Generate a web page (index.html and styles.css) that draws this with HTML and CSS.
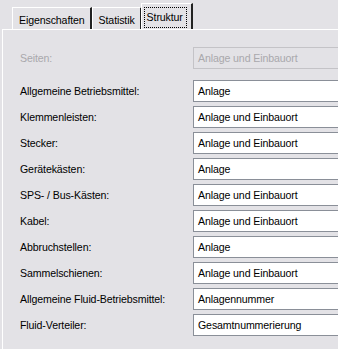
FILE: index.html
```html
<!DOCTYPE html>
<html lang="de">
<head>
  <meta charset="UTF-8" />
  <title>Struktur</title>
  <link rel="stylesheet" href="styles.css">
</head>
<body>
  <div class="tabs">
    <div class="tab">Eigenschaften</div>
    <div class="tab">Statistik</div>
    <div class="tab active"><span class="focus">Struktur</span></div>
  </div>
  <div class="panel">
    <div class="row disabled">
      <span class="label">Seiten:</span>
      <div class="field">Anlage und Einbauort</div>
    </div>
    <div class="rows">
      <div class="row"><span class="label">Allgemeine Betriebsmittel:</span><div class="field">Anlage</div></div>
      <div class="row"><span class="label">Klemmenleisten:</span><div class="field">Anlage und Einbauort</div></div>
      <div class="row"><span class="label">Stecker:</span><div class="field">Anlage und Einbauort</div></div>
      <div class="row"><span class="label">Gerätekästen:</span><div class="field">Anlage</div></div>
      <div class="row"><span class="label">SPS- / Bus-Kästen:</span><div class="field">Anlage und Einbauort</div></div>
      <div class="row"><span class="label">Kabel:</span><div class="field">Anlage und Einbauort</div></div>
      <div class="row"><span class="label">Abbruchstellen:</span><div class="field">Anlage</div></div>
      <div class="row"><span class="label">Sammelschienen:</span><div class="field">Anlage und Einbauort</div></div>
      <div class="row"><span class="label">Allgemeine Fluid-Betriebsmittel:</span><div class="field">Anlagennummer</div></div>
      <div class="row"><span class="label">Fluid-Verteiler:</span><div class="field">Gesamtnummerierung</div></div>
    </div>
  </div>
</body>
</html>
```

FILE: styles.css
```css
:root {
  --bg: #e3e2e6;
  --text: #000;
  --muted: #a9a8ac;
  --field-border: #8a8f98;
}
* { box-sizing: border-box; margin: 0; padding: 0; }
body {
  width: 338px;
  height: 349px;
  overflow: hidden;
  background: var(--bg);
  font-family: 'Liberation Sans', Arial, sans-serif;
  font-size: 10.6px;
  letter-spacing: -0.12px;
  color: var(--text);
}

/* Reiter */
.tabs {
  display: flex;
  align-items: flex-end;
  height: 29px;
  padding-left: 12px;
}
.tab {
  height: 22px;
  padding: 5px 5px 0 6px;
  border-top: 1px solid #fff;
  border-left: 1px solid #fff;
  border-right: 2px solid #222;
  line-height: 14px;
}
.tab.active {
  height: 26px;
  padding: 3px 4px 0 2px;
  margin-left: -1px;
  background: var(--bg);
}
.focus {
  display: block;
  padding: 2px 3px 3px 2px;
  border: 1px dotted #000;
}

/* Inhalt */
.panel {
  height: 320px;
  margin-left: 2px;
  border-top: 1px solid #fff;
  border-left: 1px solid #fff;
  padding: 17px 0 0 17px;
}
.row {
  display: flex;
  align-items: center;
  height: 22px;
}
.label {
  width: 173px;
  flex: none;
}
.field {
  flex: 1;
  height: 22px;
  padding: 4px 4px 0 4px;
  background: #fff;
  border: 1px solid var(--field-border);
  border-right: none;
  white-space: nowrap;
}
.row.disabled .label { color: var(--muted); }
.row.disabled .field {
  background: var(--bg);
  border-color: #c4c3c7;
  color: var(--muted);
}
.rows {
  display: flex;
  flex-direction: column;
  gap: 4px;
  margin-top: 11px;
}
```
